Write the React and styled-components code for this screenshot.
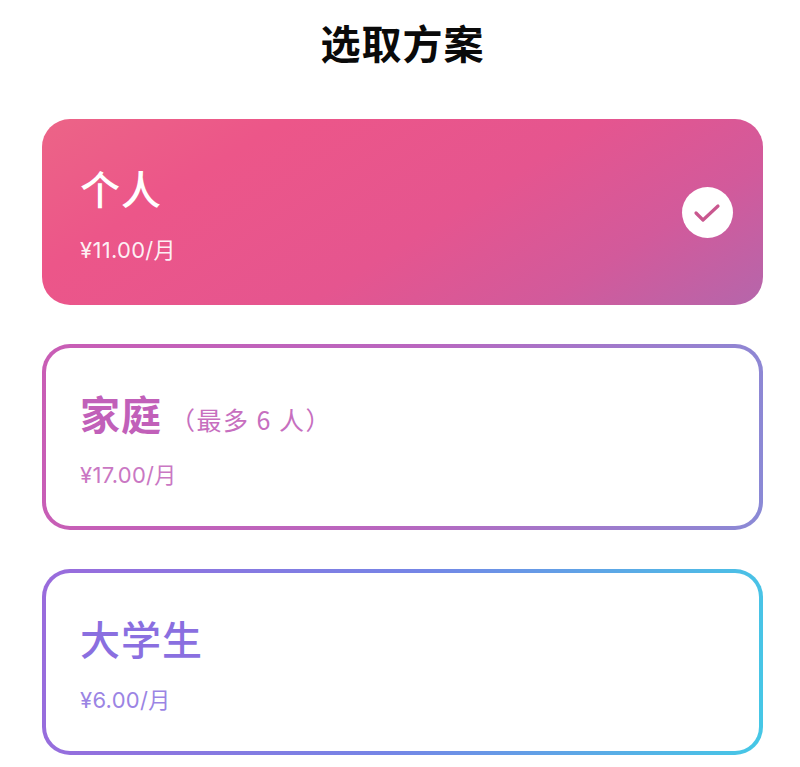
import styled, { createGlobalStyle } from "styled-components";

const GlobalStyle = createGlobalStyle`
  html, body {
    margin: 0;
    padding: 0;
    background: #ffffff;
  }
`;

const plans = [
  {
    name: "个人",
    price: "¥11.00/月",
    selected: true,
    weight: 500,
  },
  {
    name: "家庭",
    note: "（最多 6 人）",
    price: "¥17.00/月",
    color: "#c160b9",
    weight: 700,
    border: "linear-gradient(100deg, #c95db5 0%, #b966bf 50%, #8a8ad6 100%)",
  },
  {
    name: "大学生",
    price: "¥6.00/月",
    color: "#8a6fe0",
    weight: 500,
    border: "linear-gradient(100deg, #9a6bdc 0%, #7585e6 50%, #45c8e6 100%)",
  },
];

const App = () => {
  return (
    <Page>
      <GlobalStyle />
      <Title>选取方案</Title>
      <List>
        {plans.map((plan) => (
          <Card key={plan.name} $selected={plan.selected} $border={plan.border}>
            <Info>
              <Name $color={plan.color} $weight={plan.weight}>
                {plan.name}
                {plan.note && <Note>{plan.note}</Note>}
              </Name>
              <Price $color={plan.color}>{plan.price}</Price>
            </Info>
            {plan.selected && (
              <Check>
                <svg width="30" height="24" viewBox="0 0 30 24" fill="none">
                  <path
                    d="M3 13 L10 20 L25 6"
                    stroke="#c9578f"
                    strokeWidth="3.2"
                    strokeLinecap="round"
                    strokeLinejoin="round"
                  />
                </svg>
              </Check>
            )}
          </Card>
        ))}
      </List>
    </Page>
  );
};

export default App;

const Page = styled.div`
  width: 800px;
  height: 767px;
  box-sizing: border-box;
  padding: 17px 37px 0 42px;
  overflow: hidden;
  font-family: "Noto Sans CJK SC", "Noto Sans", sans-serif;
`;

const Title = styled.h1`
  margin: 0 0 47px;
  height: 55px;
  line-height: 50px;
  text-align: center;
  font-size: 40px;
  font-weight: 700;
  letter-spacing: 1px;
  color: #0a0a0a;
`;

const List = styled.div`
  display: flex;
  flex-direction: column;
  gap: 39px;
`;

const Card = styled.div`
  height: 186px;
  box-sizing: border-box;
  display: flex;
  align-items: center;
  justify-content: space-between;
  border-radius: 28px;
  border: 4px solid transparent;
  padding: 0 26px 0 34px;
  background: ${({ $selected, $border }) =>
    $selected
      ? "linear-gradient(148deg, #ec6487 0%, #ec5689 24%, #e5558f 55%, #d25a9b 78%, #b566ab 100%) border-box"
      : `linear-gradient(#fff, #fff) padding-box, ${$border} border-box`};
`;

const Info = styled.div`
  display: flex;
  flex-direction: column;
  gap: 17px;
  padding-bottom: 2px;
`;

const Name = styled.div`
  display: flex;
  align-items: baseline;
  height: 60px;
  line-height: 60px;
  font-size: 40px;
  letter-spacing: 1px;
  font-weight: ${({ $weight }) => $weight};
  color: ${({ $color }) => $color || "#ffffff"};
`;

const Note = styled.span`
  margin-left: 8px;
  font-size: 25px;
  font-weight: 400;
  letter-spacing: 1.5px;
  opacity: 0.9;
`;

const Price = styled.div`
  font-size: 22px;
  line-height: 30px;
  letter-spacing: 0.3px;
  font-family: "Inter", "Noto Sans CJK SC", sans-serif;
  color: ${({ $color }) => $color || "rgba(255, 255, 255, 0.92)"};
  opacity: ${({ $color }) => ($color ? 0.85 : 1)};
`;

const Check = styled.div`
  width: 51px;
  height: 51px;
  flex-shrink: 0;
  display: flex;
  align-items: center;
  justify-content: center;
  border-radius: 50%;
  background: #ffffff;
`;
